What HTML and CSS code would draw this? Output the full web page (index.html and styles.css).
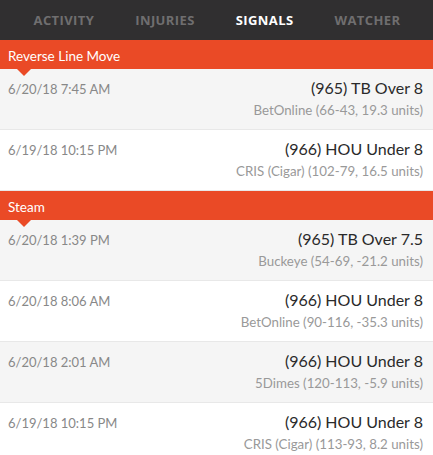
FILE: index.html
```html
<!DOCTYPE html>
<html>
<head>
<meta charset="utf-8">
<link rel="stylesheet" href="styles.css">
</head>
<body>
<nav class="tabs">
  <span class="tab">ACTIVITY</span>
  <span class="tab">INJURIES</span>
  <span class="tab active">SIGNALS</span>
  <span class="tab">WATCHER</span>
</nav>
<section class="group">
  <div class="group-head">Reverse Line Move</div>
  <div class="row alt">
    <div class="date">6/20/18 7:45 AM</div>
    <div class="info"><div class="title">(965) TB Over 8</div><div class="sub">BetOnline (66-43, 19.3 units)</div></div>
  </div>
  <div class="row">
    <div class="date">6/19/18 10:15 PM</div>
    <div class="info"><div class="title">(966) HOU Under 8</div><div class="sub">CRIS (Cigar) (102-79, 16.5 units)</div></div>
  </div>
</section>
<section class="group">
  <div class="group-head">Steam</div>
  <div class="row alt">
    <div class="date">6/20/18 1:39 PM</div>
    <div class="info"><div class="title">(965) TB Over 7.5</div><div class="sub">Buckeye (54-69, -21.2 units)</div></div>
  </div>
  <div class="row">
    <div class="date">6/20/18 8:06 AM</div>
    <div class="info"><div class="title">(966) HOU Under 8</div><div class="sub">BetOnline (90-116, -35.3 units)</div></div>
  </div>
  <div class="row alt">
    <div class="date">6/20/18 2:01 AM</div>
    <div class="info"><div class="title">(966) HOU Under 8</div><div class="sub">5Dimes (120-113, -5.9 units)</div></div>
  </div>
  <div class="row">
    <div class="date">6/19/18 10:15 PM</div>
    <div class="info"><div class="title">(966) HOU Under 8</div><div class="sub">CRIS (Cigar) (113-93, 8.2 units)</div></div>
  </div>
</section>
</body>
</html>
```
FILE: styles.css
```css
* { box-sizing: border-box; }
html, body { margin: 0; padding: 0; }
body {
  width: 433px;
  height: 455px;
  overflow: hidden;
  background: #fff;
  font-family: Lato, "Open Sans", sans-serif;
}
.tabs {
  height: 40px;
  background: #302f30;
  display: flex;
  justify-content: center;
  align-items: center;
  gap: 41px;
  padding-left: 1px;
}
.tab {
  font-family: "Open Sans", sans-serif;
  font-weight: 700;
  font-size: 13px;
  color: #6f6e6f;
  letter-spacing: 0.4px;
}
.tab.active { color: #fff; }
.group-head {
  position: relative;
  height: 29px;
  background: #ea4a26;
  color: #fff;
  font-size: 13.5px;
  line-height: 29px;
  padding: 2px 0 0 8px;
}
.group-head::after {
  content: "";
  position: absolute;
  left: 17px;
  top: 29px;
  border-left: 7px solid transparent;
  border-right: 7px solid transparent;
  border-top: 7px solid #ea4a26;
}
.row {
  height: 61px;
  display: flex;
  justify-content: space-between;
  padding: 9px 10px 0 8px;
  border-bottom: 1px solid #e8e8e8;
  background: #fff;
}
.row.alt { background: #f5f5f5; }
.date {
  font-size: 13px;
  color: #888;
  padding-top: 3px;
}
.info { text-align: right; }
.title {
  font-size: 16px;
  color: #2a2a2a;
  line-height: 20px;
}
.sub {
  font-size: 13.3px;
  color: #999;
  margin-top: 4px;
}
```
